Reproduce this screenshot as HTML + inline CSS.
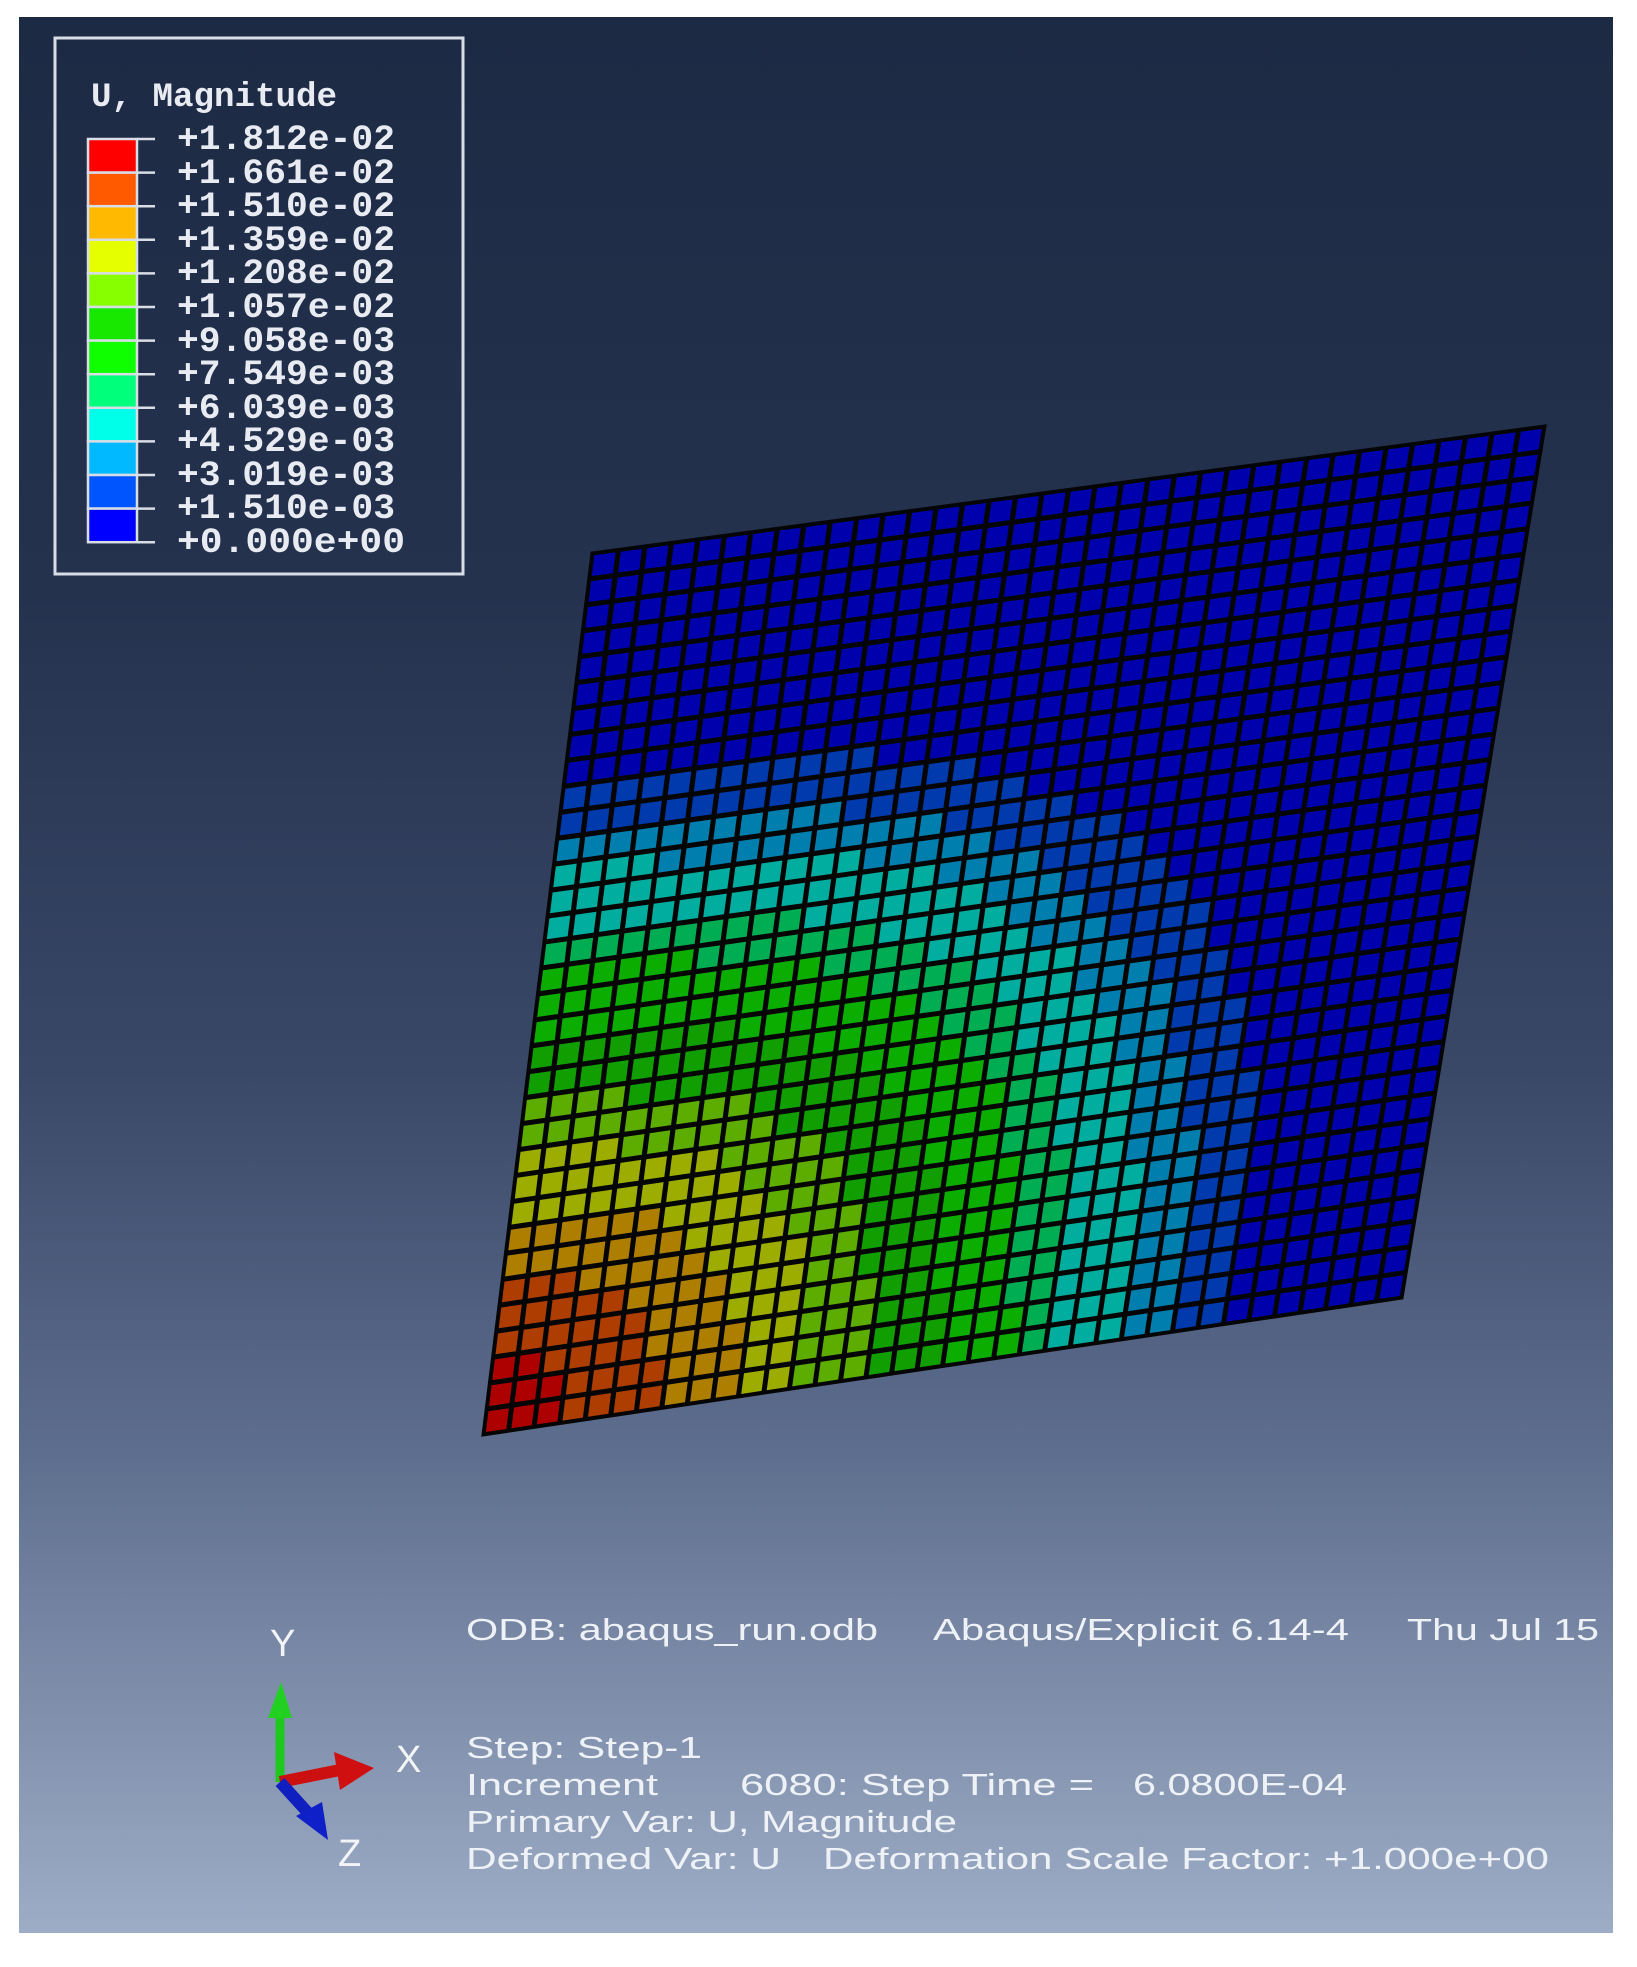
<!DOCTYPE html>
<html><head><meta charset="utf-8"><style>
html,body{margin:0;padding:0;background:#fff;}
svg{display:block}
</style></head><body>
<svg id="s" width="1637" height="1967" viewBox="0 0 1637 1967" xmlns="http://www.w3.org/2000/svg">
<defs>
<linearGradient id="bg" x1="0" y1="0" x2="0" y2="1">
<stop offset="0" stop-color="#1d2a44"/>
<stop offset="0.3" stop-color="#24324e"/>
<stop offset="0.55" stop-color="#3a4868"/>
<stop offset="0.75" stop-color="#5e6e8e"/>
<stop offset="1" stop-color="#9dadc6"/>
</linearGradient>
</defs>
<rect x="19" y="17" width="1594" height="1916" fill="url(#bg)"/>
<g id="mesh"></g>
<rect x="55" y="38" width="408" height="536" fill="none" stroke="#d8dde6" stroke-width="3"/>
<g font-family="Liberation Mono, monospace" fill="#e8ecf2" font-size="34" font-weight="bold">
<text x="91" y="106" textLength="246" lengthAdjust="spacingAndGlyphs">U, Magnitude</text>
</g>
<g id="bar"></g>
<g>
<line x1="280" y1="1782" x2="280" y2="1712" stroke="#1ec81e" stroke-width="9"/>
<polygon points="268,1718 292,1718 281,1682" fill="#22d022"/>
<line x1="280" y1="1782" x2="340" y2="1770" stroke="#cc1010" stroke-width="12"/>
<polygon points="334,1752 340,1790 374,1768" fill="#d01010"/>
<line x1="280" y1="1782" x2="310" y2="1815" stroke="#1020c0" stroke-width="12"/>
<polygon points="296,1816 322,1802 328,1840" fill="#1020c8"/>
</g>
<g font-family="Liberation Sans, sans-serif" fill="#f2f4f8" font-size="38">
<text x="270" y="1656">Y</text>
<text x="396" y="1772">X</text>
<text x="338" y="1866">Z</text>
</g>
<g font-family="Liberation Sans, sans-serif" fill="#eef1f6" font-size="31">
<text x="466" y="1640" textLength="412" lengthAdjust="spacingAndGlyphs">ODB: abaqus_run.odb</text>
<text x="933" y="1640" textLength="416" lengthAdjust="spacingAndGlyphs">Abaqus/Explicit 6.14-4</text>
<text x="1407" y="1640" textLength="192" lengthAdjust="spacingAndGlyphs">Thu Jul 15</text>
<text x="466" y="1758" textLength="236" lengthAdjust="spacingAndGlyphs">Step: Step-1</text>
<text x="466" y="1795" textLength="192" lengthAdjust="spacingAndGlyphs">Increment</text>
<text x="740" y="1795" textLength="354" lengthAdjust="spacingAndGlyphs">6080: Step Time =</text>
<text x="1133" y="1795" textLength="214" lengthAdjust="spacingAndGlyphs">6.0800E-04</text>
<text x="466" y="1832" textLength="491" lengthAdjust="spacingAndGlyphs">Primary Var: U, Magnitude</text>
<text x="466" y="1869" textLength="315" lengthAdjust="spacingAndGlyphs">Deformed Var: U</text>
<text x="823" y="1869" textLength="726" lengthAdjust="spacingAndGlyphs">Deformation Scale Factor: +1.000e+00</text>
</g>
<g font-family="Liberation Mono, monospace" fill="#e8ecf2" font-size="35" font-weight="bold">
<text x="177" y="149" textLength="218" lengthAdjust="spacingAndGlyphs">+1.812e-02</text>
<text x="177" y="183" textLength="218" lengthAdjust="spacingAndGlyphs">+1.661e-02</text>
<text x="177" y="216" textLength="218" lengthAdjust="spacingAndGlyphs">+1.510e-02</text>
<text x="177" y="250" textLength="218" lengthAdjust="spacingAndGlyphs">+1.359e-02</text>
<text x="177" y="283" textLength="218" lengthAdjust="spacingAndGlyphs">+1.208e-02</text>
<text x="177" y="317" textLength="218" lengthAdjust="spacingAndGlyphs">+1.057e-02</text>
<text x="177" y="351" textLength="218" lengthAdjust="spacingAndGlyphs">+9.058e-03</text>
<text x="177" y="384" textLength="218" lengthAdjust="spacingAndGlyphs">+7.549e-03</text>
<text x="177" y="418" textLength="218" lengthAdjust="spacingAndGlyphs">+6.039e-03</text>
<text x="177" y="451" textLength="218" lengthAdjust="spacingAndGlyphs">+4.529e-03</text>
<text x="177" y="485" textLength="218" lengthAdjust="spacingAndGlyphs">+3.019e-03</text>
<text x="177" y="518" textLength="218" lengthAdjust="spacingAndGlyphs">+1.510e-03</text>
<text x="177" y="552" textLength="228" lengthAdjust="spacingAndGlyphs">+0.000e+00</text>
</g>
</svg>
<script>
(function(){
var NS="http://www.w3.org/2000/svg";
var cols=["#0000ff","#0055ff","#00b9ff","#00ffe8","#00ff7a","#10ff00","#18e800","#88ff00","#e6ff00","#ffb900","#ff5a00","#ff0000"];
var bar=document.getElementById("bar");
var y0=139,h=33.6;
for(var i=0;i<12;i++){
 var r=document.createElementNS(NS,"rect");
 r.setAttribute("x",88);r.setAttribute("y",y0+i*h);r.setAttribute("width",49);r.setAttribute("height",h);
 r.setAttribute("fill",cols[11-i]);r.setAttribute("stroke","#d8dde6");r.setAttribute("stroke-width","2.5");
 bar.appendChild(r);
}
for(var i=0;i<=12;i++){
 var l=document.createElementNS(NS,"line");
 l.setAttribute("x1",137);l.setAttribute("x2",155);l.setAttribute("y1",y0+i*h);l.setAttribute("y2",y0+i*h);
 l.setAttribute("stroke","#d8dde6");l.setAttribute("stroke-width","2.5");bar.appendChild(l);
}
var TL=[592,553],TR=[1545,426],BR=[1402,1298],BL=[483,1435];
function Q(u,v){
 return [(1-u)*(1-v)*TL[0]+u*(1-v)*TR[0]+u*v*BR[0]+(1-u)*v*BL[0],
 (1-u)*(1-v)*TL[1]+u*(1-v)*TR[1]+u*v*BR[1]+(1-u)*v*BL[1]];
}
function P(u,v){var q=Q(u,v);return q[0].toFixed(1)+","+q[1].toFixed(1);}
function dark(hex,f){
 var n=parseInt(hex.slice(1),16);
 var r=Math.round(((n>>16)&255)*f),g=Math.round(((n>>8)&255)*f),b=Math.round((n&255)*f);
 return "rgb("+r+","+g+","+b+")";
}
var th={11:0.107,10:0.226,9:0.33,8:0.42,7:0.50,6:0.60,5:0.70,4:0.76,3:0.85,2:0.92,1:1.0};
var m=document.getElementById("mesh");
var NC=36,NR=34,s="";
s+='<polygon points="'+P(0,0)+' '+P(1,0)+' '+P(1,1)+' '+P(0,1)+'" fill="#050505" stroke="#050505" stroke-width="3"/>';
var p=2.7;
for(var j=0;j<NR;j++)for(var i=0;i<NC;i++){
 var u=(i+0.5)/NC,v=(j+0.5)/NR;
 var d=Math.pow(Math.pow(u/0.815,p)+Math.pow((1-v)/0.746,p),1/p);
 var b=0;
 for(var k=11;k>=1;k--){ if(d<th[k]){b=k;break;} }
 var g=0.1;
 s+='<polygon points="'+P(i/NC+g/NC,j/NR+g/NR)+' '+P((i+1)/NC-g/NC,j/NR+g/NR)+' '+P((i+1)/NC-g/NC,(j+1)/NR-g/NR)+' '+P(i/NC+g/NC,(j+1)/NR-g/NR)+'" fill="'+dark(cols[b],0.68)+'"/>';
}
m.innerHTML=s;
})();
</script>
</body></html>
